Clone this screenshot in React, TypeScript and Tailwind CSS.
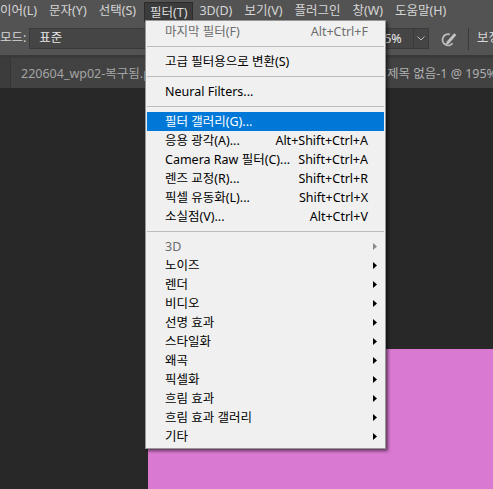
type Row =
  | { kind: 'sep' }
  | {
      kind: 'item'
      label: string
      shortcut?: string
      sub?: boolean
      disabled?: boolean
      active?: boolean
    }

const MENUS = ['이어(L)', '문자(Y)', '선택(S)', '필터(T)', '3D(D)', '보기(V)', '플러그인', '창(W)', '도움말(H)']

const FILTER_ROWS: Row[] = [
  { kind: 'item', label: '마지막 필터(F)', shortcut: 'Alt+Ctrl+F', disabled: true },
  { kind: 'sep' },
  { kind: 'item', label: '고급 필터용으로 변환(S)' },
  { kind: 'sep' },
  { kind: 'item', label: 'Neural Filters...' },
  { kind: 'sep' },
  { kind: 'item', label: '필터 갤러리(G)...', active: true },
  { kind: 'item', label: '응용 광각(A)...', shortcut: 'Alt+Shift+Ctrl+A' },
  { kind: 'item', label: 'Camera Raw 필터(C)...', shortcut: 'Shift+Ctrl+A' },
  { kind: 'item', label: '렌즈 교정(R)...', shortcut: 'Shift+Ctrl+R' },
  { kind: 'item', label: '픽셀 유동화(L)...', shortcut: 'Shift+Ctrl+X' },
  { kind: 'item', label: '소실점(V)...', shortcut: 'Alt+Ctrl+V' },
  { kind: 'sep' },
  { kind: 'item', label: '3D', sub: true, disabled: true },
  { kind: 'item', label: '노이즈', sub: true },
  { kind: 'item', label: '렌더', sub: true },
  { kind: 'item', label: '비디오', sub: true },
  { kind: 'item', label: '선명 효과', sub: true },
  { kind: 'item', label: '스타일화', sub: true },
  { kind: 'item', label: '왜곡', sub: true },
  { kind: 'item', label: '픽셀화', sub: true },
  { kind: 'item', label: '흐림 효과', sub: true },
  { kind: 'item', label: '흐림 효과 갤러리', sub: true },
  { kind: 'item', label: '기타', sub: true },
]

function MenuBar() {
  return (
    <div className="flex h-[22px] shrink-0 bg-[#535353]">
      <div className="ml-[-6px] flex">
        {MENUS.map((m) => (
          <div
            key={m}
            className={
              m === '필터(T)'
                ? 'ml-[2px] mt-[2px] flex h-[20px] items-center whitespace-nowrap border-x border-t border-[#2c2c2c] bg-[#3b3b3b] px-[5px] leading-[18px] text-[#dcdcdc]'
                : 'flex items-center whitespace-nowrap px-[6px] leading-[22px] text-[#d6d6d6]'
            }
          >
            {m}
          </div>
        ))}
      </div>
    </div>
  )
}

// stylus over a pressure ring, used for the opacity toggle
function PressureIcon() {
  return (
    <svg width="18" height="16" viewBox="0 0 18 16" fill="none">
      <path d="M9.8 3.4 A5.6 5.6 0 1 0 12.6 12.2" stroke="#bdbdbd" strokeWidth="1.8" />
      <path d="M5.6 14.2 L6.8 10.4 L14.2 2.2 L16.4 4.1 L9 12.4 Z" fill="#c4c4c4" />
    </svg>
  )
}

function OptionsBar() {
  return (
    <div className="flex h-[33px] shrink-0 items-center overflow-hidden bg-[#535353] text-[#d6d6d6]">
      <div className="flex w-[372px] shrink-0 items-center">
        <span className="whitespace-nowrap">모드:</span>
        <div className="ml-[3px] flex h-[21px] w-[150px] items-center border border-[#3a3a3a] bg-[#454545] pl-[9px] text-[#e6e6e6]">
          표준
        </div>
      </div>
      <div className="flex h-[21px] shrink-0 border border-[#3a3a3a] bg-[#454545]">
        <div className="w-[40px] pl-[4px] leading-[19px] text-[#ececec]">65%</div>
        <div className="flex w-[15px] items-center justify-center border-l border-[#3a3a3a]">
          <svg width="8" height="5" viewBox="0 0 8 5" fill="none">
            <path d="M0.5 0.5 L4 4 L7.5 0.5" stroke="#bdbdbd" />
          </svg>
        </div>
      </div>
      <div className="ml-[11px] flex shrink-0 items-center">
        <PressureIcon />
      </div>
      <div className="ml-[10px] h-[22px] w-px shrink-0 bg-[#3a3a3a]" />
      <span className="ml-[8px] whitespace-nowrap">보정: 10%</span>
    </div>
  )
}

function TabBar() {
  return (
    <div className="flex h-[30px] shrink-0 overflow-hidden bg-[#424242] text-[#a4a4a4]">
      <div className="w-[11px] shrink-0 border-r border-[#343434] bg-[#3c3c3c]" />
      <div className="flex w-[134px] shrink-0 items-center overflow-hidden whitespace-nowrap pl-[10px] pt-[2px]">
        220604_wp02-복구됨.psd @ 100%(RGB/8)
      </div>
      <div className="w-[232px] shrink-0" />
      <div className="flex items-center whitespace-nowrap pl-[10px] pt-[2px] text-[#b0b0b0]">
        제목 없음-1 @ 195%(RGB/8)
      </div>
    </div>
  )
}

function Arrow({ muted }: { muted?: boolean }) {
  return (
    <svg width="4" height="7" viewBox="0 0 4 7">
      <path d="M0 0 L4 3.5 L0 7 Z" fill={muted ? '#8a8a8a' : '#000'} />
    </svg>
  )
}

function FilterMenu() {
  return (
    <div className="absolute left-[145px] top-[20px] w-[241px] border border-[#979797] bg-[#f0f0f0] pb-[2px] pt-[1px] shadow-[2px_2px_3px_rgba(0,0,0,0.55)]">
      {FILTER_ROWS.map((r, i) =>
        r.kind === 'sep' ? (
          <div key={i} className="mx-[1px] flex h-[11px] items-center">
            <div className="h-px w-full bg-[#bdbdbd]" />
          </div>
        ) : (
          <div
            key={i}
            className={
              'mx-[1px] flex h-[19px] items-center whitespace-nowrap pl-[18px] leading-[19px] ' +
              (r.active ? 'bg-[#0078d7] text-white' : r.disabled ? 'text-[#6d6d6d]' : 'text-black')
            }
          >
            <span className="flex-1">{r.label}</span>
            {r.shortcut && <span>{r.shortcut}</span>}
            <span className="flex w-[16px] items-center pl-[5px]">{r.sub && <Arrow muted={r.disabled} />}</span>
          </div>
        ),
      )}
    </div>
  )
}

export default function App() {
  return (
    <div className="relative flex h-[489px] w-[493px] flex-col overflow-hidden bg-[#282828] font-['Noto_Sans','Noto_Sans_CJK_KR',sans-serif] text-[12.5px]">
      <MenuBar />
      <OptionsBar />
      <div className="h-[3px] shrink-0 bg-[#393939]" />
      <TabBar />
      <div className="flex flex-1 flex-col pl-[148px] pt-[261px]">
        <div className="flex-1 bg-[#da79d1]" />
      </div>
      <FilterMenu />
    </div>
  )
}
